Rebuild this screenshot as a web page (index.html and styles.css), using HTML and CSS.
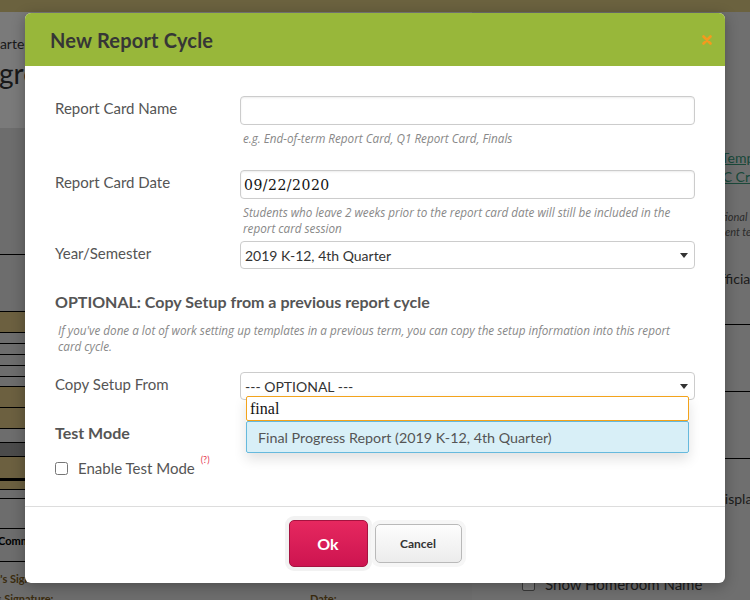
FILE: index.html
```html
<!DOCTYPE html>
<html lang="en">
<head>
    <meta charset="UTF-8">
    <meta name="viewport" content="width=device-width, initial-scale=1.0">
    <title>New Report Cycle</title>
    <link rel="stylesheet" href="styles.css">
</head>
<body>
    <div class="page">
        <div class="topbar"></div>
        <div class="page-main">
            <div class="left-pane">
                <div class="crumb">Quarter</div>
                <div class="page-title">Progress</div>
                <div class="doc">
                    <div class="doc-space doc-space--lg"></div>
                    <div class="doc-space doc-space--md"></div>
                    <div class="doc-band"></div>
                    <div class="doc-line"></div>
                    <div class="doc-line"></div>
                    <div class="doc-line"></div>
                    <div class="doc-line"></div>
                    <div class="doc-space doc-space--sm"></div>
                    <div class="doc-band"></div>
                    <div class="doc-band"></div>
                    <div class="doc-line doc-line--tall"></div>
                    <div class="doc-band doc-band--dark"></div>
                    <div class="doc-band doc-band--heavy"></div>
                    <div class="doc-band doc-band--thin"></div>
                    <div class="doc-line doc-line--short"></div>
                    <div class="doc-space doc-space--comments"></div>
                    <div class="doc-text">Comments</div>
                    <div class="doc-sig">Teacher's Signature:</div>
                    <div class="doc-sig doc-sig--split">
                        <span class="doc-sig-principal">Principal's Signature:</span>
                        <span>Date:</span>
                    </div>
                </div>
            </div>
            <div class="right-pane">
                <a class="rp-link">Templates</a>
                <a class="rp-link rp-link--shift">RC Criteria</a>
                <div class="rp-note rp-note--first">optional</div>
                <div class="rp-note rp-note--shift">comment text</div>
                <div class="rp-text">official</div>
                <div class="rp-cell"></div>
                <div class="rp-cell"></div>
                <div class="rp-cell"></div>
                <div class="rp-text rp-text--shift">display</div>
                <div class="rp-check"><span class="rp-box"></span>Show Homeroom Name</div>
                <div class="rp-check"><span class="rp-box rp-box--on"></span>Show Teacher Name</div>
            </div>
        </div>
    </div>

    <div class="backdrop"></div>

    <div class="modal">
        <div class="modal-header">
            <h2 class="modal-title">New Report Cycle</h2>
            <button class="modal-close" type="button">
                <svg width="10" height="10" viewBox="0 0 10 10">
                    <path d="M1.5 1.5 L8.5 8.5 M8.5 1.5 L1.5 8.5" stroke="#f39a1e" stroke-width="2.6" stroke-linecap="round"/>
                </svg>
            </button>
        </div>

        <div class="modal-body">
            <div class="form-row form-row--spaced">
                <label class="form-label">Report Card Name</label>
                <div class="form-field">
                    <input type="text" class="form-input">
                    <div class="help">e.g. End-of-term Report Card, Q1 Report Card, Finals</div>
                </div>
            </div>

            <div class="form-row">
                <label class="form-label">Report Card Date</label>
                <div class="form-field">
                    <input type="text" class="form-input" value="09/22/2020">
                    <div class="help">Students who leave 2 weeks prior to the report card date will still be included in the report card session</div>
                </div>
            </div>

            <div class="form-row">
                <label class="form-label">Year/Semester</label>
                <div class="form-field">
                    <div class="select">
                        <span>2019 K-12, 4th Quarter</span>
                        <span class="caret"></span>
                    </div>
                </div>
            </div>

            <h3 class="section-title">OPTIONAL: Copy Setup from a previous report cycle</h3>
            <p class="section-note">If you've done a lot of work setting up templates in a previous term, you can copy the setup information into this report card cycle.</p>

            <div class="form-row form-row--last">
                <label class="form-label">Copy Setup From</label>
                <div class="form-field form-field--dropdown">
                    <div class="select">
                        <span>--- OPTIONAL ---</span>
                        <span class="caret"></span>
                    </div>
                    <div class="dropdown">
                        <input type="text" class="dropdown-search" value="final">
                        <div class="dropdown-option">Final Progress Report (2019 K-12, 4th Quarter)</div>
                    </div>
                </div>
            </div>

            <h3 class="section-title">Test Mode</h3>
            <label class="check">
                <input type="checkbox" class="check-box">
                <span>Enable Test Mode</span>
                <sup class="hint">(?)</sup>
            </label>
        </div>

        <div class="modal-footer">
            <button class="btn btn-ok" type="button">Ok</button>
            <button class="btn btn-cancel" type="button">Cancel</button>
        </div>
    </div>
</body>
</html>
```

FILE: styles.css
```css
* {
    box-sizing: border-box;
}

body {
    margin: 0;
    width: 750px;
    height: 600px;
    overflow: hidden;
    position: relative;
    background: #fff;
    font-family: 'Lato', 'Liberation Sans', sans-serif;
}

/* page behind the modal */
.page {
    height: 600px;
    display: flex;
    flex-direction: column;
}

.topbar {
    height: 12px;
    flex-shrink: 0;
    background: #dfce85;
}

.page-main {
    flex: 1;
    display: flex;
}

.left-pane {
    width: 472px;
    background: #fff;
    overflow: hidden;
}

.crumb {
    margin: 23px 0 0 -19px;
    font-size: 14px;
    line-height: 18px;
    color: #3a3a3a;
}

.page-title {
    margin: 3px 0 0 -43px;
    font-size: 28px;
    line-height: 34px;
    color: #333;
}

.doc {
    margin-top: 38px;
    background: #e3e3e3;
}

.doc-space,
.doc-line,
.doc-band {
    border-bottom: 1px solid #000;
}

.doc-space--lg { height: 127px; }
.doc-space--md { height: 57px; }
.doc-space--sm { height: 10px; }
.doc-space--comments { height: 30px; }
.doc-line { height: 11px; }
.doc-line--tall { height: 14px; }
.doc-line--short { height: 9px; }

.doc-band {
    height: 21px;
    background: #e2c886;
}

.doc-band--dark {
    height: 14px;
    background: #9e9e9e;
}

.doc-band--heavy {
    height: 24px;
    border-bottom-width: 3px;
}

.doc-band--thin {
    height: 9px;
}

.doc-text {
    height: 33px;
    margin-left: -2px;
    line-height: 24px;
    font-size: 11px;
    font-weight: 700;
    border-bottom: 1px solid #000;
}

.doc-sig {
    height: 27px;
    line-height: 34px;
    margin-left: -38px;
    font-size: 11px;
    font-weight: 700;
    color: #7a5a20;
}

.doc-sig--split {
    display: flex;
    height: 20px;
    margin-left: -48px;
    line-height: 20px;
}

.doc-sig-principal {
    width: 358px;
}

.right-pane {
    flex: 1;
    background: #e8e8e8;
    padding-top: 136px;
    overflow: hidden;
}

.rp-link {
    display: block;
    padding-left: 249px;
    font-size: 14px;
    line-height: 19px;
    color: #37987a;
    text-decoration: underline;
    white-space: nowrap;
}

.rp-link--shift {
    padding-left: 242px;
}

.rp-note {
    padding-left: 238px;
    font-size: 11px;
    line-height: 15px;
    font-style: italic;
    color: #5c5c5c;
    white-space: nowrap;
}

.rp-note--first {
    margin-top: 23px;
}

.rp-note--shift {
    padding-left: 225px;
}

.rp-text {
    margin-top: 31px;
    padding-left: 241px;
    font-size: 14px;
    line-height: 18px;
    color: #3c3c3c;
    white-space: nowrap;
}

.rp-text--shift {
    padding-left: 245px;
}

.rp-cell {
    height: 37px;
    border-bottom: 1px solid #000;
}

.rp-cell + .rp-cell {
    height: 67px;
}

.rp-check {
    display: flex;
    align-items: center;
    gap: 10px;
    margin: 67px 0 0 50px;
    font-size: 15px;
    line-height: 18px;
    color: #3c3c3c;
    white-space: nowrap;
}

.rp-check + .rp-check {
    margin-top: 8px;
}

.rp-box {
    width: 13px;
    height: 13px;
    border: 1px solid #777;
    border-radius: 2px;
    background: #fff;
}

.rp-box--on {
    background: #1b5fd6;
    border-color: #1b5fd6;
}

.backdrop {
    position: absolute;
    inset: 0;
    background: rgba(0, 0, 0, 0.52);
}

/* modal */
.modal {
    position: absolute;
    top: 13px;
    left: 25px;
    width: 700px;
    background: #fff;
    border-radius: 6px;
    box-shadow: 0 3px 14px rgba(0, 0, 0, 0.3);
}

.modal-header {
    height: 53px;
    display: flex;
    align-items: center;
    justify-content: space-between;
    padding: 0 13px 0 25px;
    background: #98b73a;
    border-radius: 6px 6px 0 0;
}

.modal-title {
    margin: 0;
    font-size: 20px;
    font-weight: 700;
    letter-spacing: 0.2px;
    color: #363636;
}

.modal-close {
    padding: 0;
    border: none;
    background: none;
    display: flex;
    cursor: pointer;
}

.modal-body {
    padding: 30px 30px 28px;
}

.form-row {
    display: grid;
    grid-template-columns: 185px 1fr;
    margin-bottom: 5px;
}

.form-row--spaced {
    margin-bottom: 24px;
}

.form-row--last {
    margin-bottom: 0;
}

.form-label {
    padding-top: 2px;
    font-size: 15px;
    line-height: 20px;
    color: #555;
}

.form-field--dropdown {
    position: relative;
}

.form-input {
    display: block;
    width: 100%;
    height: 29px;
    padding: 0 3px;
    border: 1px solid #ccc;
    border-radius: 4px;
    box-shadow: inset 0 1px 2px rgba(0, 0, 0, 0.08);
    font-family: 'DejaVu Serif', serif;
    font-size: 14px;
    letter-spacing: 0.5px;
    color: #111;
    outline: none;
}

.help {
    margin-top: 5px;
    padding-left: 3px;
    font-family: 'Open Sans', 'Lato', sans-serif;
    font-size: 11.7px;
    line-height: 16px;
    font-style: italic;
    color: #888;
}

.select {
    height: 28px;
    display: flex;
    align-items: center;
    justify-content: space-between;
    padding: 0 6px 0 4px;
    border: 1px solid #ccc;
    border-radius: 4px;
    background: #fff;
    font-size: 14px;
    color: #333;
}

.caret {
    width: 0;
    height: 0;
    border-left: 4px solid transparent;
    border-right: 4px solid transparent;
    border-top: 5px solid #333;
}

.section-title {
    margin: 22px 0 0;
    font-size: 16px;
    line-height: 22px;
    font-weight: 700;
    color: #555;
}

.section-note {
    max-width: 628px;
    margin: 9px 0 18px;
    padding-left: 3px;
    font-family: 'Open Sans', 'Lato', sans-serif;
    font-size: 11.7px;
    line-height: 16px;
    font-style: italic;
    color: #888;
}

.dropdown {
    position: absolute;
    top: 24px;
    left: 6px;
    right: 6px;
    z-index: 2;
    box-shadow: 0 6px 12px rgba(0, 0, 0, 0.12);
}

.dropdown-search {
    display: block;
    width: 100%;
    height: 25px;
    padding: 0 3px;
    border: 1px solid #f3a31b;
    border-radius: 2px;
    background: #fff;
    font-family: 'Liberation Serif', serif;
    font-size: 16px;
    color: #111;
    outline: none;
}

.dropdown-option {
    height: 32px;
    display: flex;
    align-items: center;
    padding-left: 11px;
    border: 1px solid #66b9dd;
    border-radius: 2px;
    background: #d8eff7;
    font-size: 14.3px;
    color: #555;
}

.check {
    margin-top: 14px;
    display: flex;
    align-items: center;
    font-size: 15px;
    line-height: 20px;
    color: #555;
}

.check-box {
    width: 13px;
    height: 13px;
    margin: 0 10px 0 0;
}

.hint {
    align-self: flex-start;
    margin: -3px 0 0 6px;
    font-size: 9px;
    line-height: 10px;
    color: #e5334d;
}

.modal-footer {
    height: 77px;
    display: flex;
    align-items: center;
    justify-content: center;
    gap: 7px;
    padding-bottom: 3px;
    border-top: 1px solid #ddd;
}

.btn {
    font-family: 'Lato', 'Liberation Sans', sans-serif;
    font-weight: 700;
    border-radius: 5px;
    cursor: pointer;
}

.btn-ok {
    width: 79px;
    height: 47px;
    border: 1px solid #a51340;
    background: linear-gradient(#e6285f, #cd1450);
    color: #fff;
    font-size: 16px;
    box-shadow: 0 0 0 4px #f2f2f2;
}

.btn-cancel {
    width: 87px;
    height: 39px;
    border: 1px solid #b9b9b9;
    background: linear-gradient(#fdfdfd, #ececec);
    color: #333;
    font-size: 12px;
    box-shadow: 0 0 0 4px #f6f6f6;
}
```
